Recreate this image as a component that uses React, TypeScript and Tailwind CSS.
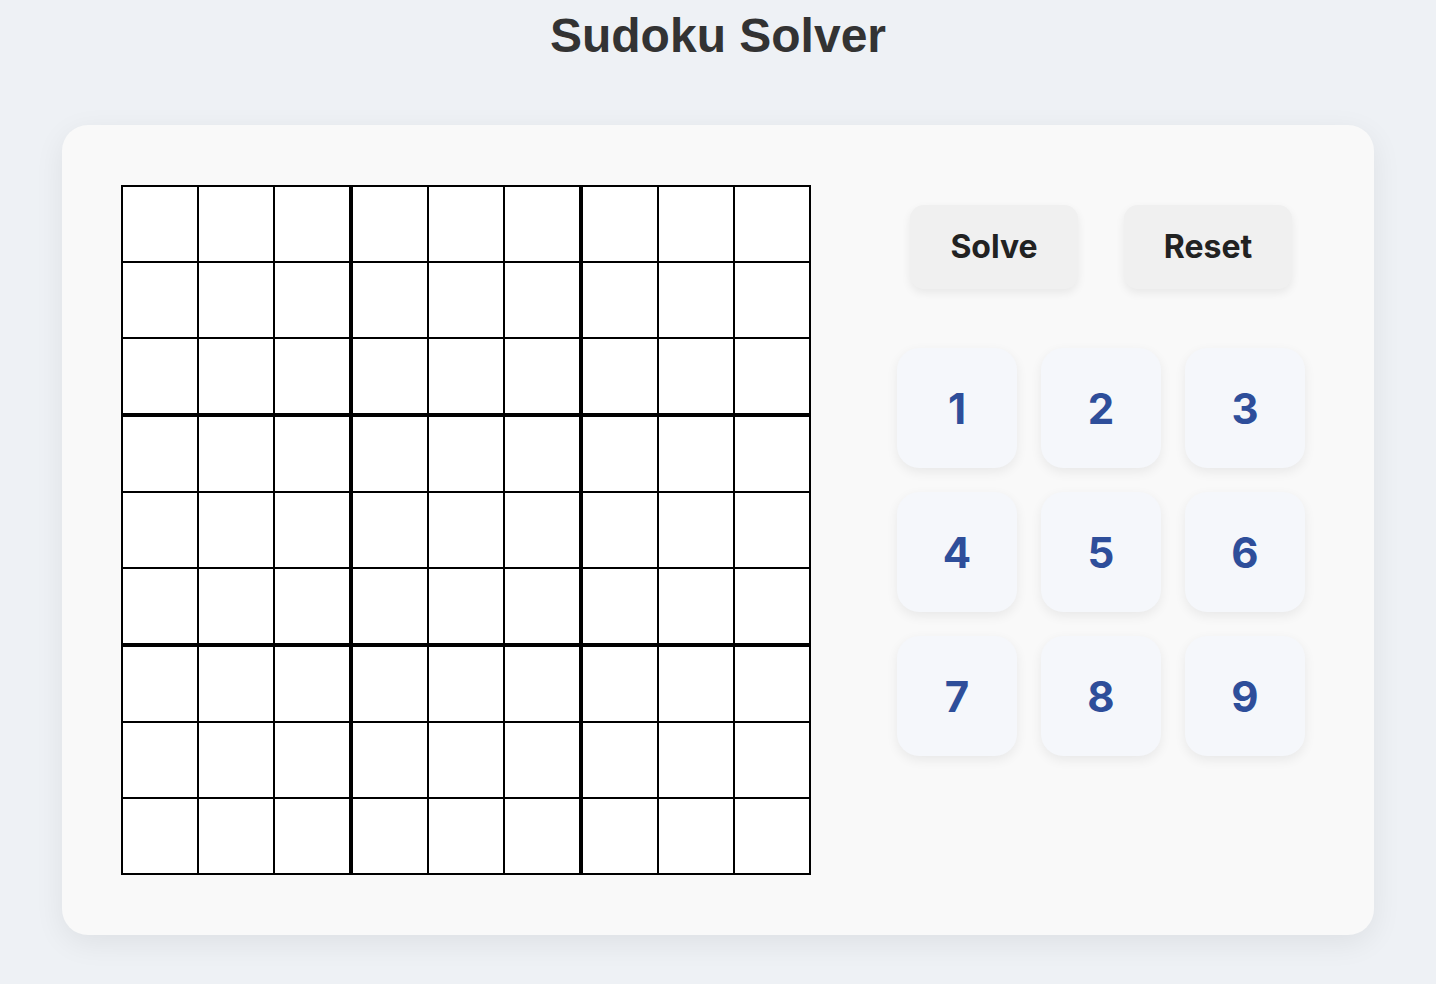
const digits = [1, 2, 3, 4, 5, 6, 7, 8, 9];

function Block() {
  return (
    <div className="grid grid-cols-3 gap-[2px]">
      {digits.map((d) => (
        <div key={d} className="w-[74px] h-[74px] bg-white" />
      ))}
    </div>
  );
}

function Board() {
  return (
    <div className="grid grid-cols-3 gap-[4px] bg-black p-[2px] shrink-0">
      {digits.map((b) => (
        <Block key={b} />
      ))}
    </div>
  );
}

export default function App() {
  return (
    <div
      className="min-h-screen bg-[#eef1f5] flex flex-col items-center pt-[12px]"
      style={{ fontFamily: 'Inter, "Liberation Sans", sans-serif' }}
    >
      {/* Title */}
      <h1
        className="text-[48px] leading-[48px] font-bold text-[#333333]"
        style={{ fontFamily: '"Liberation Sans", Arial, sans-serif' }}
      >
        Sudoku Solver
      </h1>

      {/* Card */}
      <div className="mt-[65px] w-[1312px] rounded-[26px] bg-[#f9f9f9] py-[60px] pl-[59px] pr-[60px] flex shadow-[0_8px_30px_rgba(0,0,0,0.07)]">
        <Board />

        <div className="ml-[86px] mt-[20px] flex flex-col items-center">
          {/* Actions */}
          <div className="flex gap-[46px]">
            {['Solve', 'Reset'].map((label) => (
              <button
                key={label}
                className="w-[168px] h-[84px] rounded-[14px] bg-[#f0f0f0] text-[32px] font-bold text-[#222222] shadow-[0_4px_10px_rgba(0,0,0,0.07)]"
              >
                {label}
              </button>
            ))}
          </div>

          {/* Number pad */}
          <div className="mt-[59px] grid grid-cols-3 gap-[24px]">
            {digits.map((d) => (
              <button
                key={d}
                className="w-[120px] h-[120px] rounded-[22px] bg-[#f5f7fb] text-[42px] font-bold text-[#2e4e9a] shadow-[0_4px_12px_rgba(0,0,0,0.07)]"
              >
                {d}
              </button>
            ))}
          </div>
        </div>
      </div>
    </div>
  );
}
